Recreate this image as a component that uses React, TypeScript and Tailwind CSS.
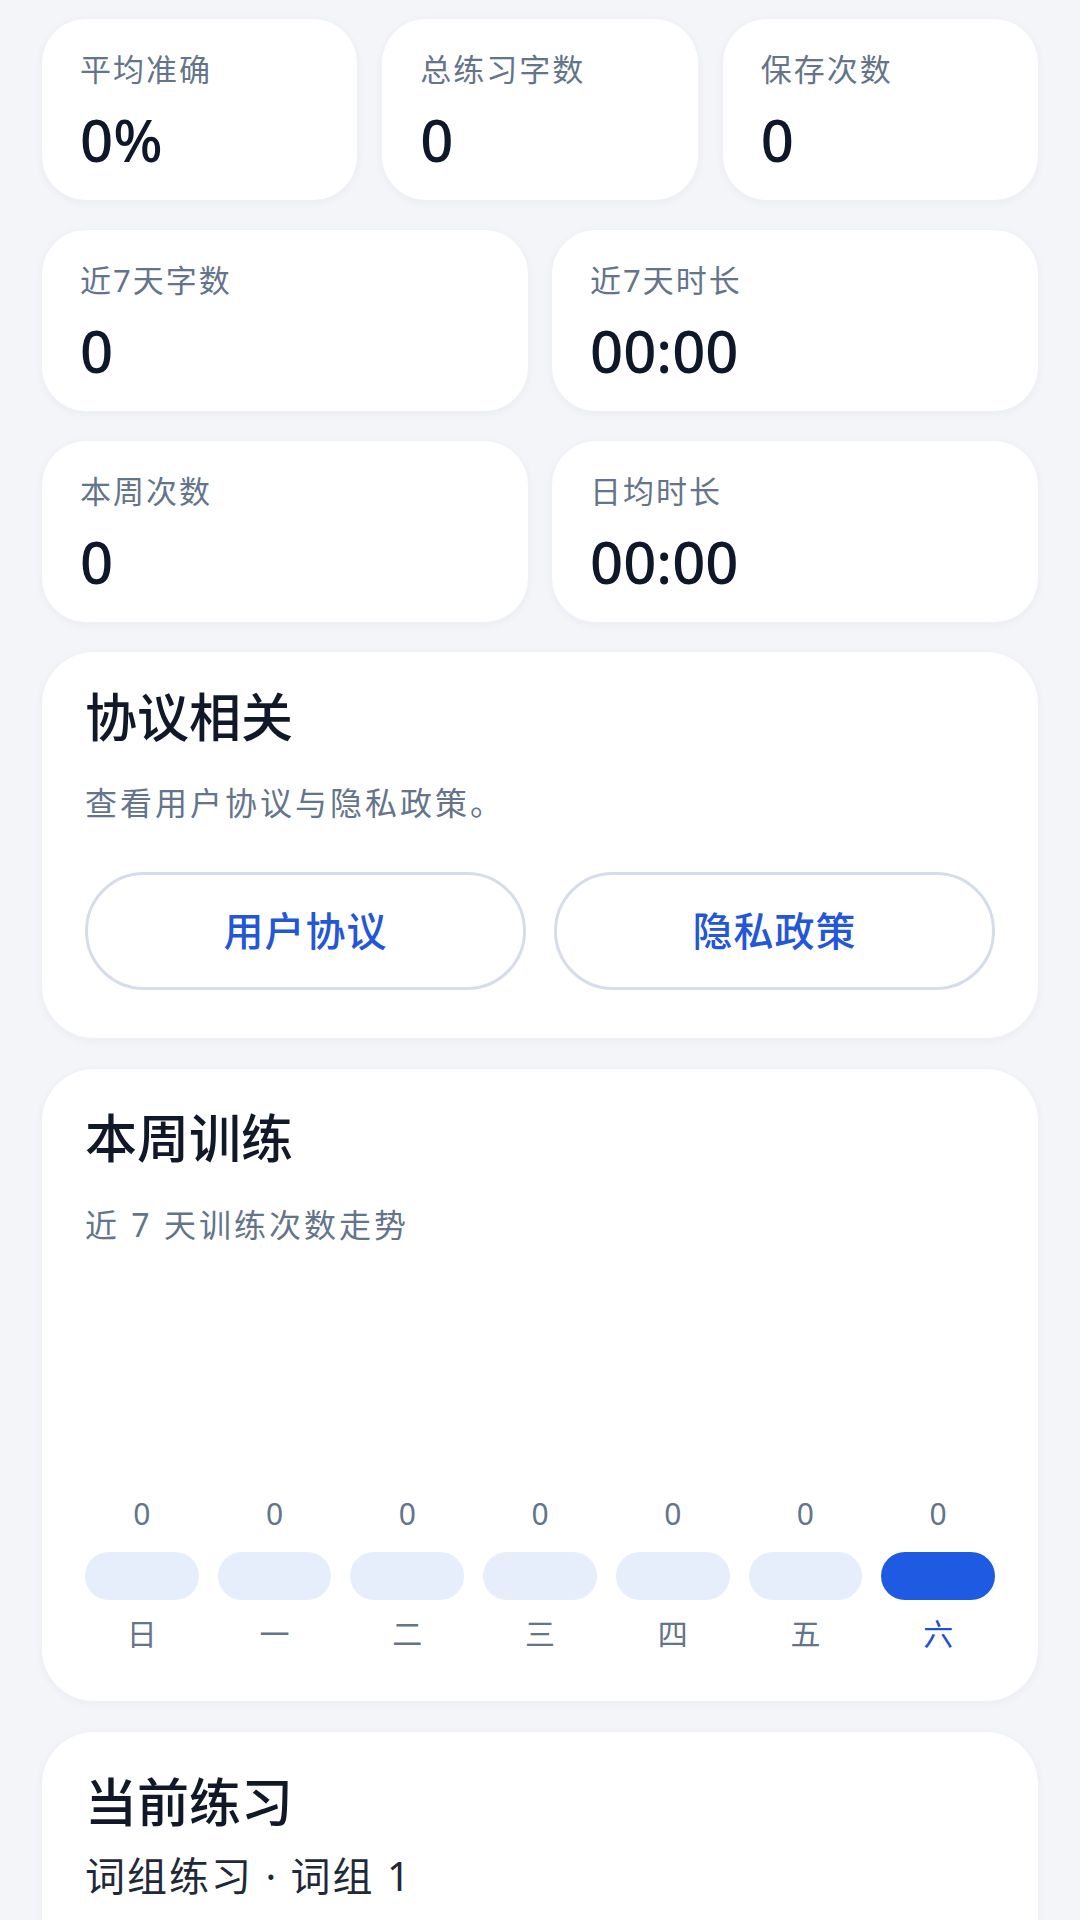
import React from "react";

const FONT = '"Noto Sans", "Noto Sans CJK SC", sans-serif';

function Stat({ label, value }: { label: string; value: string }) {
  return (
    <div className="flex flex-col rounded-[44px] bg-white px-[38px] pb-[24px] pt-[28px] shadow-[0_2px_10px_rgba(30,41,59,0.05)] ring-1 ring-[#eef1f6]">
      <div className="text-[31px] leading-[44px] tracking-[2px] text-[#64748b]">{label}</div>
      <div className="mt-[13px] text-[58px] font-medium leading-[72px] text-[#0f172a]">{value}</div>
    </div>
  );
}

const days = ["日", "一", "二", "三", "四", "五", "六"];

export default function App() {
  return (
    <div className="h-[1920px] overflow-hidden bg-[#f3f5f9] px-[42px] pt-[19px]" style={{ fontFamily: FONT }}>
      <div className="grid grid-cols-3 gap-x-[25px]">
        <Stat label="平均准确" value="0%" />
        <Stat label="总练习字数" value="0" />
        <Stat label="保存次数" value="0" />
      </div>
      <div className="mt-[30px] grid grid-cols-2 gap-x-[24px]">
        <Stat label="近7天字数" value="0" />
        <Stat label="近7天时长" value="00:00" />
      </div>
      <div className="mt-[30px] grid grid-cols-2 gap-x-[24px]">
        <Stat label="本周次数" value="0" />
        <Stat label="日均时长" value="00:00" />
      </div>

      <div className="mt-[30px] rounded-[52px] bg-white px-[43px] pb-[48px] pt-[33px] shadow-[0_2px_10px_rgba(30,41,59,0.05)] ring-1 ring-[#eef1f6]">
        <div className="text-[52px] font-medium leading-[64px] text-[#111827]">协议相关</div>
        <div className="mt-[32px] text-[32px] leading-[44px] tracking-[3px] text-[#64748b]">查看用户协议与隐私政策。</div>
        <div className="mt-[47px] grid grid-cols-2 gap-x-[28px]">
          <button className="flex h-[118px] items-center justify-center rounded-full border-[3px] border-[#d6dde9] bg-white text-[40px] font-medium tracking-[1px] text-[#2456d8]">
            用户协议
          </button>
          <button className="flex h-[118px] items-center justify-center rounded-full border-[3px] border-[#d6dde9] bg-white text-[40px] font-medium tracking-[1px] text-[#2456d8]">
            隐私政策
          </button>
        </div>
      </div>

      <div className="mt-[31px] rounded-[52px] bg-white px-[43px] pb-[47px] pt-[37px] shadow-[0_2px_10px_rgba(30,41,59,0.05)] ring-1 ring-[#eef1f6]">
        <div className="text-[52px] font-medium leading-[64px] text-[#111827]">本周训练</div>
        <div className="mt-[33px] text-[32px] leading-[44px] tracking-[3px] text-[#64748b]">近 7 天训练次数走势</div>
        <div className="flex h-[407px] items-end gap-x-[19px]">
          {days.map((d, i) => {
            const active = i === days.length - 1;
            return (
              <div key={d} className="flex flex-1 flex-col items-center">
                <div className="text-[30px] leading-[40px] text-[#64748b]">0</div>
                <div
                  className={
                    active
                      ? "mt-[18px] h-[48px] w-full rounded-full bg-[#1f5ae2]"
                      : "mt-[18px] h-[48px] w-full rounded-full bg-[#e6edfb]"
                  }
                />
                <div
                  className={
                    active
                      ? "mt-[14px] text-[30px] leading-[40px] text-[#1f4fd6]"
                      : "mt-[14px] text-[30px] leading-[40px] text-[#64748b]"
                  }
                >
                  {d}
                </div>
              </div>
            );
          })}
        </div>
      </div>

      <div className="mt-[31px] min-h-[260px] rounded-t-[52px] bg-white px-[43px] pt-[38px] shadow-[0_2px_10px_rgba(30,41,59,0.05)] ring-1 ring-[#eef1f6]">
        <div className="text-[52px] font-medium leading-[64px] text-[#111827]">当前练习</div>
        <div className="mt-[16px] text-[40px] leading-[52px] tracking-[2px] text-[#1f2937]">词组练习 · 词组 1</div>
      </div>
    </div>
  );
}
